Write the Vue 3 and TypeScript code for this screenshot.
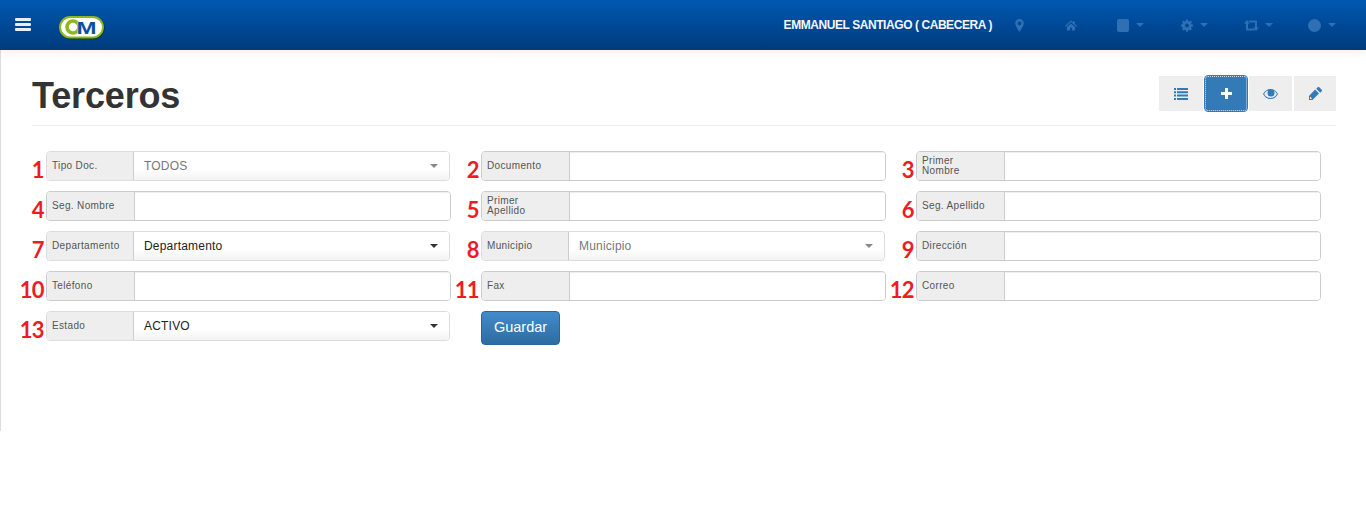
<script setup lang="ts">
interface Field {
  n: number
  label: string
  kind: 'input' | 'select'
  value?: string
  muted?: boolean
}
const fields: Field[] = [
  { n: 1, label: 'Tipo Doc.', kind: 'select', value: 'TODOS', muted: true },
  { n: 2, label: 'Documento', kind: 'input' },
  { n: 3, label: 'Primer Nombre', kind: 'input' },
  { n: 4, label: 'Seg. Nombre', kind: 'input' },
  { n: 5, label: 'Primer Apellido', kind: 'input' },
  { n: 6, label: 'Seg. Apellido', kind: 'input' },
  { n: 7, label: 'Departamento', kind: 'select', value: 'Departamento' },
  { n: 8, label: 'Municipio', kind: 'select', value: 'Municipio', muted: true },
  { n: 9, label: 'Dirección', kind: 'input' },
  { n: 10, label: 'Teléfono', kind: 'input' },
  { n: 11, label: 'Fax', kind: 'input' },
  { n: 12, label: 'Correo', kind: 'input' },
  { n: 13, label: 'Estado', kind: 'select', value: 'ACTIVO' }
]
</script>

<template>
  <div class="app">
    <header class="topbar">
      <button class="burger" aria-label="Menú"><span></span><span></span><span></span></button>
      <svg class="logo" width="46" height="23" viewBox="0 0 46 23">
        <rect x="1" y="1" width="44.500" height="22" rx="11" fill="#0b2a12" />
        <rect x="1" y="1" width="43" height="20.500" rx="10.250" fill="#fff" stroke="#8cb81e" stroke-width="2" />
        <circle cx="14" cy="11" r="6" fill="none" stroke="#8cb81e" stroke-width="3.600" />
        <text x="17.500" y="17.500" textLength="20" lengthAdjust="spacingAndGlyphs" class="logo-m">M</text>
      </svg>
      <div class="top-right">
        <span class="user">EMMANUEL SANTIAGO ( CABECERA )</span>
        <svg class="ico pin" width="9" height="13" viewBox="0 0 10 15"><path fill-rule="evenodd" d="M5 0a5 5 0 0 1 5 5c0 2.600-3 6.800-5 10C3 11.800 0 7.600 0 5a5 5 0 0 1 5-5zm0 2.800a2.200 2.200 0 1 0 0 4.400 2.200 2.200 0 0 0 0-4.400z"/></svg>
        <svg class="ico home" width="12" height="11" viewBox="0 0 13 11"><path d="M6.500 0l2.300 2V.8h1.800v2.900L13 5.900l-.8.900-5.700-5-5.700 5-.8-.9zM2 7.200l4.500-4 4.500 4V11H7.500V8h-2v3H2z"/></svg>
        <span class="menu m-square"><i class="square"></i><i class="caret"></i></span>
        <span class="menu m-gear">
          <svg class="ico" width="12" height="13" viewBox="0 0 13 13"><path fill-rule="evenodd" d="M5.400 0h2.200l.3 1.800 1 .4 1.500-1 1.500 1.500-1 1.500.4 1 1.700.3v2.200l-1.700.3-.4 1 1 1.500-1.500 1.500-1.500-1-1 .4-.3 1.800H5.400l-.3-1.800-1-.4-1.500 1-1.500-1.500 1-1.500-.4-1L0 7.600V5.400l1.700-.3.4-1-1-1.500 1.500-1.500 1.500 1 1-.4zM6.500 4.400a2.100 2.100 0 1 0 0 4.200 2.100 2.100 0 0 0 0-4.200z"/></svg>
          <i class="caret"></i>
        </span>
        <span class="menu m-retweet">
          <svg class="ico" width="15" height="11" viewBox="0 0 15 11"><path d="M3 0l3 3.500H4v5h5.500l1.600 2H3c-.6 0-1-.4-1-1V3.500H0zM4.500.5H12c.6 0 1 .4 1 1v6h2L12 11 9 7.500h2v-5H6z"/></svg>
          <i class="caret"></i>
        </span>
        <span class="menu m-circle"><i class="dot"></i><i class="caret"></i></span>
      </div>
    </header>

    <main class="page">
      <div class="page-head">
        <h1>Terceros</h1>
        <div class="tools">
          <button class="tool t-list" aria-label="Lista">
            <svg width="14" height="12" viewBox="0 0 14 12"><path d="M0 0h2v2H0zM3 0h11v2H3zM0 3.300h2v2H0zM3 3.300h11v2H3zM0 6.600h2v2H0zM3 6.600h11v2H3zM0 9.900h2V12H0zM3 9.900h11V12H3z"/></svg>
          </button>
          <button class="tool active" aria-label="Nuevo">
            <svg width="11" height="11" viewBox="0 0 11 11"><path d="M4 0h3v4h4v3H7v4H4V7H0V4h4z"/></svg>
          </button>
          <button class="tool t-eye" aria-label="Ver">
            <svg width="15" height="10" viewBox="0 0 15 10"><path fill-rule="evenodd" d="M7.500 0c3.200 0 5.900 2 7.500 5-1.600 3-4.300 5-7.500 5S1.600 8 0 5c1.600-3 4.300-5 7.500-5zM4.200 1.700C2.900 2.400 1.900 3.500 1.100 5c1.400 2.400 3.700 4 6.400 4s5-1.600 6.400-4c-.8-1.500-1.800-2.600-3.100-3.300.4.600.7 1.400.7 2.300a3.500 3.500 0 0 1-7 0c0-.9.300-1.700.7-2.300z"/></svg>
          </button>
          <button class="tool t-pencil" aria-label="Editar">
            <svg width="13" height="13" viewBox="0 0 13 13"><path fill-rule="evenodd" d="M9.500 0c.3 0 .6.100.8.300l2.400 2.400c.4.400.4 1.100 0 1.500l-1.500 1.500-3.900-3.900L8.700.3c.2-.2.500-.3.800-.3zM6.100 2.500L10 6.400 3.400 13H0V9.100zM1.100 9.600l-.2 2.500 2.300-.2z"/></svg>
          </button>
        </div>
      </div>

      <form class="form" @submit.prevent>
        <div v-for="f in fields" :key="f.n" class="cell">
          <span class="num">{{ f.n }}</span>
          <div class="group" :class="{ 'is-select': f.kind === 'select' }">
            <label class="addon"><span>{{ f.label }}</span></label>
            <div v-if="f.kind === 'select'" class="select" :class="{ muted: f.muted }">
              <span>{{ f.value }}</span><i class="arrow"></i>
            </div>
            <input v-else class="input" type="text" />
          </div>
        </div>
        <div class="cell">
          <span class="num"></span>
          <button class="save" type="submit">Guardar</button>
        </div>
      </form>
    </main>
  </div>
</template>

<style>
html, body { margin: 0; background: #fff; }
</style>

<style scoped>
.app { font-family: "Liberation Sans", Arial, sans-serif; color: #333; }
button { font-family: inherit; }

.topbar {
  height: 50px;
  display: flex;
  align-items: center;
  background: linear-gradient(to bottom, #0058b2, #003a7b);
  box-shadow: 0 2px 10px rgba(0, 0, 0, .07);
  position: relative;
  padding-left: 15px;
  padding-right: 30px;
  box-sizing: border-box;
}
.burger {
  width: 16px; height: 13px; padding: 0; border: 0; background: none;
  display: flex; flex-direction: column; justify-content: space-between;
  margin-top: -1px;
}
.burger span { display: block; height: 3px; background: #e9eef5; border-radius: 1px; }
.logo { margin-left: 28px; margin-top: 4px; overflow: visible; }
.logo-m { font: 700 17px "Liberation Sans", sans-serif; fill: #0a4f9e; stroke: #fff; stroke-width: .5px; paint-order: stroke; }

.top-right { margin-left: auto; display: flex; align-items: center; }
.user { font-size: 12px; font-weight: 700; letter-spacing: -.43px; color: #f4f7fb; }
.ico { fill: #2f6fb3; display: block; }
.pin { margin-left: 23px; }
.home { margin-left: 41px; }
.menu { display: flex; align-items: center; gap: 7px; }
.m-square { margin-left: 40px; }
.m-gear { margin-left: 37px; }
.m-retweet { margin-left: 36px; gap: 6px; }
.m-circle { margin-left: 35px; gap: 7px; }
.square { width: 12px; height: 13px; background: #2f6fb3; border-radius: 2px; display: block; }
.dot { width: 13px; height: 13px; background: #2f6fb3; border-radius: 50%; display: block; }
.caret {
  display: block; width: 0; height: 0;
  border-left: 4.500px solid transparent; border-right: 4.500px solid transparent;
  border-top: 4.500px solid #2f6fb3;
}

.page {
  height: 381px;
  box-sizing: border-box;
  border-left: 1px solid #ddd;
  padding: 26px 30px 0 31px;
}
.page-head {
  height: 50px;
  box-sizing: border-box;
  border-bottom: 1px solid #eee;
  display: flex;
  justify-content: space-between;
}
h1 { margin: 0; font-size: 36px; line-height: 40px; letter-spacing: -.15px; font-weight: 700; color: #333; }
.tools { display: flex; gap: 2px; height: 35px; }
.tool {
  width: 44px; height: 35px; padding: 0; border: 0; background: #eee;
  display: flex; align-items: center; justify-content: center;
  fill: #337ab7;
}
.tool svg { display: block; }
.tool.active {
  width: 42px; background: #337ab7; fill: #fff; border-radius: 3px;
  border: 1px dotted #cfe0f0; outline: 1px solid #337ab7; outline-offset: 0;
  box-sizing: border-box;
}
.t-eye { width: 43px; }
.t-pencil { width: 42px; }

.form {
  margin-top: 25px;
  margin-left: -16px;
  display: grid;
  grid-template-columns: repeat(3, 435px);
  row-gap: 10px;
  align-items: start;
}
.cell { display: flex; }
.num {
  width: 28px;
  height: 30px;
  margin-right: 2px;
  text-align: right;
  font: 700 22px/37px Lato, sans-serif;
  letter-spacing: -.6px;
  color: #ed1c24;
}
.group {
  width: 405px; height: 30px; display: flex;
  border: 1px solid #ccc; border-radius: 4px; box-sizing: border-box;
  overflow: hidden;
}
.group.is-select { width: 404px; border-color: #ddd; }
.addon {
  width: 88px; flex: none; box-sizing: border-box;
  padding: 0 4px 0 5px;
  background: #eee; border-right: 1px solid #ccc;
  display: flex; align-items: center;
  font-size: 10px; line-height: 10px; letter-spacing: .35px; color: #555;
}
.addon span { max-width: 68px; }
.is-select .addon { width: 87px; }
.input {
  flex: 1; min-width: 0; border: 0; padding: 0 10px; margin: 0; outline: 0;
  background: #fff; box-shadow: inset 0 1px 1px rgba(0, 0, 0, .075);
}
.select {
  flex: 1; display: flex; align-items: center; justify-content: space-between;
  padding: 0 11px 0 10px;
  background: linear-gradient(to bottom, #fff 60%, #f3f3f3);
  font-size: 12px; letter-spacing: .2px; color: #222;
}
.select.muted { color: #777; }
.arrow {
  display: block; width: 0; height: 0;
  border-left: 4.500px solid transparent; border-right: 4.500px solid transparent;
  border-top: 4.500px solid #333;
}
.muted .arrow { border-top-color: #888; }
.save {
  width: 79px; height: 34px; padding: 0;
  border: 1px solid #2b669a; border-radius: 4px;
  background: linear-gradient(to bottom, #428bca, #2d6ca2);
  color: #fff; font-size: 14.500px; padding-bottom: 2px;
}
</style>
